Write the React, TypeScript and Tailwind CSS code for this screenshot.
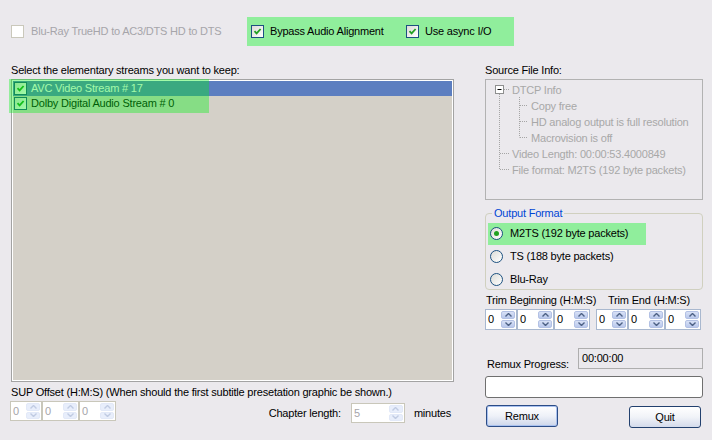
import React from 'react';

const CheckBox = ({ checked = false, disabled = false }: { checked?: boolean; disabled?: boolean }) => (
  <span
    className={
      disabled
        ? 'flex h-[13px] w-[13px] shrink-0 items-center justify-center border border-[#cac8bb] bg-white'
        : 'flex h-[13px] w-[13px] shrink-0 items-center justify-center border border-[#1c5180] bg-gradient-to-br from-[#dcdcd7] to-white'
    }
  >
    {checked && (
      <svg width="9" height="9" viewBox="0 0 9 9">
        <path d="M1.5 4.2 L3.6 6.4 L7.6 2" stroke="#21a121" strokeWidth="1.8" fill="none" />
      </svg>
    )}
  </span>
);

const Radio = ({ checked = false }: { checked?: boolean }) => (
  <span className="flex h-[13px] w-[13px] shrink-0 items-center justify-center rounded-full border border-[#1c5180] bg-gradient-to-br from-[#dcdcd7] to-white">
    {checked && <span className="h-[5px] w-[5px] rounded-full bg-[#21a121]" />}
  </span>
);

const Arrow = ({ up, disabled }: { up?: boolean; disabled?: boolean }) => (
  <svg width="7" height="4" viewBox="0 0 7 4">
    <path
      d={up ? 'M0.5 3.5 L3.5 0.5 L6.5 3.5' : 'M0.5 0.5 L3.5 3.5 L6.5 0.5'}
      stroke={disabled ? '#c0cbe2' : '#4d6185'}
      strokeWidth="1.4"
      fill="none"
    />
  </svg>
);

const Spin = ({ value, width, disabled = false }: { value: string; width: string; disabled?: boolean }) => (
  <div
    className={`flex h-full ${width} items-stretch border bg-white ${
      disabled ? 'border-[#c9c7ba] text-[#a6a5aa]' : 'border-[#a9b8cf] text-black'
    }`}
  >
    <span className="flex flex-1 items-center pl-[2px]">{value}</span>
    <div className="flex w-[15px] flex-col gap-px py-px pr-px">
      <span
        className={`flex flex-1 items-center justify-center rounded-[2px] border ${
          disabled ? 'border-[#e2e9f8] bg-[#e8eefb]' : 'border-[#b3c1e4] bg-gradient-to-b from-[#d8e1f6] to-[#b9c8ec]'
        }`}
      >
        <Arrow up disabled={disabled} />
      </span>
      <span
        className={`flex flex-1 items-center justify-center rounded-[2px] border ${
          disabled ? 'border-[#e2e9f8] bg-[#e8eefb]' : 'border-[#b3c1e4] bg-gradient-to-b from-[#d8e1f6] to-[#b9c8ec]'
        }`}
      >
        <Arrow disabled={disabled} />
      </span>
    </div>
  </div>
);

const treeRows = [
  { text: 'DTCP Info', indent: 'pl-[26px]' },
  { text: 'Copy free', indent: 'pl-[45px]' },
  { text: 'HD analog output is full resolution', indent: 'pl-[45px]' },
  { text: 'Macrovision is off', indent: 'pl-[45px]' },
  { text: 'Video Length: 00:00:53.4000849', indent: 'pl-[26px]' },
  { text: 'File format: M2TS (192 byte packets)', indent: 'pl-[26px]' },
];

export default function App() {
  return (
    <div className="h-[440px] w-[712px] overflow-hidden bg-[#ebe9ed] font-['Liberation_Sans',Arial,sans-serif] text-[11px] tracking-[-0.2px] text-black">
      {/* top options */}
      <div className="flex h-[60px] items-start pl-[11px] pt-[17px]">
        <label className="flex h-[29px] w-[236px] items-center gap-[7px] text-[#a6a5aa]">
          <CheckBox disabled />
          <span>Blu-Ray TrueHD to AC3/DTS HD to DTS</span>
        </label>
        <div className="flex h-[29px] w-[267px] items-center bg-[#90ee9c] pl-[4px]">
          <label className="flex w-[155px] items-center gap-[6px]">
            <CheckBox checked />
            <span>Bypass Audio Alignment</span>
          </label>
          <label className="flex items-center gap-[6px]">
            <CheckBox checked />
            <span>Use async I/O</span>
          </label>
        </div>
      </div>

      <div className="flex pl-[11px]">
        {/* left column */}
        <div className="flex w-[443px] flex-col">
          <div className="flex h-[19px] items-center pt-px">Select the elementary streams you want to keep:</div>
          <div className="relative h-[303px] border border-[#a3a3a3] bg-[#d4d0c8] p-px shadow-[inset_0_0_0_1px_#ffffff]">
            <div className="flex h-[15px] items-center gap-[4px] bg-[#5c7ec0] pl-[1px] text-white">
              <CheckBox checked />
              <span>AVC Video Stream # 17</span>
            </div>
            <div className="flex h-[15px] items-center gap-[4px] pl-[1px]">
              <CheckBox checked />
              <span>Dolby Digital Audio Stream # 0</span>
            </div>
            <div className="absolute left-[-3px] top-[-1px] h-[34px] w-[200px] bg-[rgba(0,245,20,0.37)]" />
          </div>
          <div className="flex h-[19px] items-center pt-px">
            SUP Offset (H:M:S) (When should the first subtitle presetation graphic be shown.)
          </div>
          <div className="flex items-start">
            <div className="-ml-px flex h-[20px]">
              <Spin value="0" width="w-[32px]" disabled />
              <Spin value="0" width="w-[37px]" disabled />
              <Spin value="0" width="w-[37px]" disabled />
            </div>
            <div className="ml-auto mr-[3px] mt-[2px] flex h-[20px] items-center">
              <span className="mr-[10px]">Chapter length:</span>
              <Spin value="5" width="w-[54px]" disabled />
              <span className="ml-[9px]">minutes</span>
            </div>
          </div>
        </div>

        {/* right column */}
        <div className="ml-[31px] flex w-[218px] flex-col">
          <div className="flex h-[19px] items-center pt-px">Source File Info:</div>
          <div className="relative h-[121px] border border-[#b2b2b2] pt-[2px] text-[#a8a8a8]">
            <svg className="absolute left-[-1px] top-[-1px]" width="218" height="121">
              <g stroke="#a5a5a5" strokeDasharray="1 1" fill="none">
                <path d="M14.5 15 V90.5 M15 74.5 H24 M15 90.5 H24" />
                <path d="M34.5 18 V58.5 M35 26.5 H42 M35 42.5 H42 M35 58.5 H42" />
                <path d="M19 10.5 H24" />
              </g>
              <rect x="10.5" y="6.5" width="8" height="8" fill="#fff" stroke="#8e8f8f" />
              <path d="M12.5 10.5 H16.5" stroke="#000" />
            </svg>
            {treeRows.map((r) => (
              <div key={r.text} className={`relative flex h-[16px] items-center ${r.indent}`}>
                {r.text}
              </div>
            ))}
          </div>

          <fieldset className="mt-[5px] h-[85px] rounded-[4px] border border-[#d0d0bf] px-px">
            <legend className="ml-[5px] px-[2px] text-[#0046d5]">Output Format</legend>
            <div className="ml-px mt-px flex h-[22px] w-[158px] items-center gap-[7px] bg-[#90ee9c] pl-[2px]">
              <Radio checked />
              <span>M2TS (192 byte packets)</span>
            </div>
            <div className="flex h-[23px] items-center gap-[7px] pl-[3px] pt-px">
              <Radio />
              <span>TS (188 byte packets)</span>
            </div>
            <div className="flex h-[23px] items-center gap-[7px] pl-[3px]">
              <Radio />
              <span>Blu-Ray</span>
            </div>
          </fieldset>

          <div className="flex h-[19px] items-end pb-px pl-px">
            <span className="w-[122px]">Trim Beginning (H:M:S)</span>
            <span>Trim End (H:M:S)</span>
          </div>
          <div className="flex h-[21px]">
            <Spin value="0" width="w-[32px]" />
            <Spin value="0" width="w-[37px]" />
            <Spin value="0" width="w-[36px]" />
            <div className="w-[6px]" />
            <Spin value="0" width="w-[32px]" />
            <Spin value="0" width="w-[37px]" />
            <Spin value="0" width="w-[36px]" />
          </div>

          <div className="mt-[18px] flex h-[21px] items-start">
            <span className="w-[93px] pl-[2px] pt-[8px]">Remux Progress:</span>
            <div className="flex h-[21px] w-[125px] items-center border border-[#aeaeae] pb-px pl-[3px]">00:00:00</div>
          </div>
          <div className="mt-[7px] h-[22px] rounded-[3px] border border-[#6f6f6f] bg-white" />
          <div className="mt-[7px] flex justify-between pl-px pr-[2px]">
            <button className="h-[22px] w-[72px] rounded-[3px] border border-[#2b4c86] bg-gradient-to-b from-white via-[#eef1f8] to-[#cdd6ea] shadow-[inset_0_0_0_1px_#a9c1ef]">
              Remux
            </button>
            <button className="mt-px h-[22px] w-[72px] rounded-[3px] border border-[#22406e] bg-gradient-to-b from-white via-[#f1f3f8] to-[#d4dbeb]">
              Quit
            </button>
          </div>
        </div>
      </div>
    </div>
  );
}
